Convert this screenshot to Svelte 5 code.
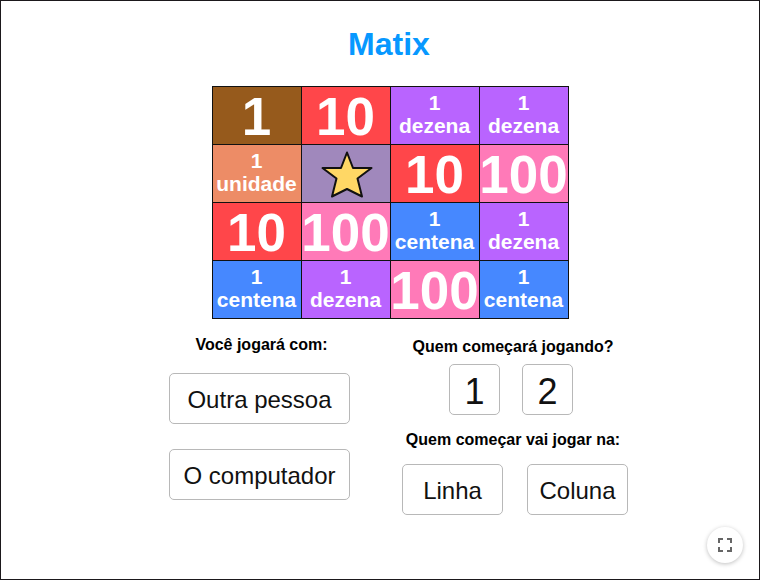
<script>
  const board = [
    ['1', 'brown'], ['10', 'red'], ['1 dezena', 'purple'], ['1 dezena', 'purple'],
    ['1 unidade', 'orange'], ['star', 'mauve'], ['10', 'red'], ['100', 'pink'],
    ['10', 'red'], ['100', 'pink'], ['1 centena', 'blue'], ['1 dezena', 'purple'],
    ['1 centena', 'blue'], ['1 dezena', 'purple'], ['100', 'pink'], ['1 centena', 'blue']
  ];

  let opponent = $state('');
  let starter = $state('');
  let direction = $state('');
</script>

<main>
  <h1>Matix</h1>

  <div class="board">
    {#each board as [label, color]}
      <div class="cell {color}">
        {#if label === 'star'}
          <svg width="54" height="50" viewBox="0 0 54 50" role="img" aria-label="Estrela">
            <path d="M28 3.500L34 19L52.500 19L38.500 29.500L43 47.500L28 40L13 47.500L17.500 29.500L3.500 19L22 19Z" fill="#ffd765" stroke="#111" stroke-width="2" stroke-linejoin="round" />
          </svg>
        {:else if label.includes(' ')}
          <span class="words">{label.split(' ')[0]}<br />{label.split(' ')[1]}</span>
        {:else}
          <span class="number">{label}</span>
        {/if}
      </div>
    {/each}
  </div>

  <div class="choices">
    <section class="opponents" aria-labelledby="opponent-label">
      <h2 id="opponent-label">Você jogará com:</h2>
      <button class="wide" onclick={() => (opponent = 'pessoa')}>Outra pessoa</button>
      <button class="wide" onclick={() => (opponent = 'computador')}>O computador</button>
    </section>

    <div class="order">
      <section class="starter" aria-labelledby="starter-label">
        <h2 id="starter-label">Quem começará jogando?</h2>
        <div class="row">
          <button class="digit" onclick={() => (starter = '1')}>1</button>
          <button class="digit" onclick={() => (starter = '2')}>2</button>
        </div>
      </section>
      <section class="direction" aria-labelledby="direction-label">
        <h2 id="direction-label">Quem começar vai jogar na:</h2>
        <div class="row">
          <button onclick={() => (direction = 'linha')}>Linha</button>
          <button onclick={() => (direction = 'coluna')}>Coluna</button>
        </div>
      </section>
    </div>
  </div>

  <button class="fullscreen" aria-label="Tela cheia" onclick={() => document.documentElement.requestFullscreen?.()}>
    <svg width="14" height="14" viewBox="0 0 14 14" fill="none" stroke="#666" stroke-width="2" aria-hidden="true">
      <path d="M1 5V1H5M9 1H13V5M13 9V13H9M5 13H1V9" />
    </svg>
  </button>
</main>

<style>
  :global(body) {
    margin: 0;
    background: #fff;
  }
  main {
    box-sizing: border-box;
    min-height: 100vh;
    padding: 24px 0 24px 20px;
    border: 1px solid #1b181b;
    display: flex;
    flex-direction: column;
    align-items: center;
    font-family: "Liberation Sans", Arial, sans-serif;
    color: #000;
  }
  h1 {
    margin: 0 0 22px;
    padding-right: 2px;
    font-size: 32px;
    line-height: 39px;
    color: #0798ff;
  }
  .board {
    display: grid;
    grid-template-columns: repeat(4, 88px);
    grid-auto-rows: 57px;
    gap: 1px;
    padding: 1px;
    background: #111;
  }
  .cell {
    display: flex;
    align-items: center;
    justify-content: center;
    color: #fff;
    font-weight: bold;
    text-align: center;
  }
  .number {
    font-size: 53px;
    line-height: 55px;
    padding-top: 2px;
  }
  .words {
    font-size: 21px;
    line-height: 23px;
    padding-bottom: 4px;
  }
  .brown { background: #965a1c; }
  .red { background: #ff464a; }
  .purple { background: #b964ff; }
  .orange { background: #ed8c66; }
  .mauve { background: #a088bc; }
  .pink { background: #ff7ab8; }
  .blue { background: #4688ff; }
  .choices {
    display: flex;
    gap: 52px;
    padding: 16px 0 0 17px;
  }
  h2 {
    margin: 0;
    font-size: 16px;
    line-height: 20px;
    text-align: center;
  }
  button {
    box-sizing: border-box;
    width: 101px;
    height: 51px;
    padding: 2px 0 0;
    border: 1px solid #b8b8b8;
    border-radius: 5px;
    background: #fff;
    color: #111;
    font-family: inherit;
    font-size: 24px;
    cursor: pointer;
  }
  .opponents {
    display: flex;
    flex-direction: column;
    gap: 25px;
  }
  .opponents h2 {
    margin-bottom: -7px;
    padding-left: 4px;
  }
  .wide {
    width: 181px;
  }
  .order {
    padding-top: 2px;
    display: flex;
    flex-direction: column;
    gap: 15px;
  }
  .row {
    display: flex;
    justify-content: center;
    gap: 24px;
  }
  .starter,
  .direction h2 {
    padding-right: 4px;
  }
  .starter .row {
    gap: 22px;
    padding: 7px 4px 0 0;
  }
  .direction .row {
    padding-top: 14px;
  }
  .digit {
    width: 51px;
    padding-top: 4px;
    font-size: 36px;
  }
  .fullscreen {
    position: fixed;
    right: 17px;
    bottom: 17px;
    width: 36px;
    height: 36px;
    padding: 0;
    display: grid;
    place-items: center;
    border: 0;
    border-radius: 50%;
    box-shadow: 0 1px 4px rgba(0, 0, 0, 0.25);
  }
</style>
